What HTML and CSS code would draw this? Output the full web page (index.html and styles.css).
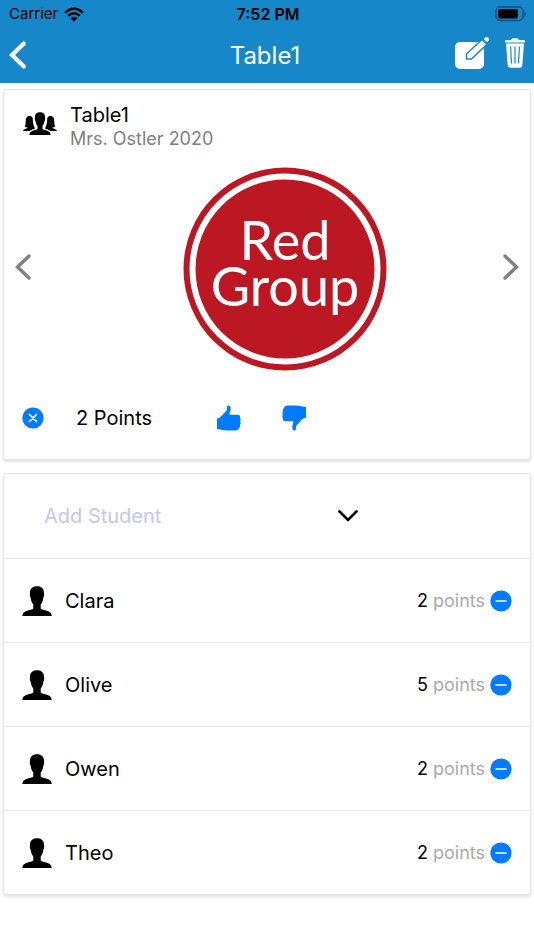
FILE: index.html
```html
<!DOCTYPE html>
<html lang="en">
<head>
<meta charset="utf-8">
<meta name="viewport" content="width=device-width, initial-scale=1">
<title>Table1</title>
<link rel="stylesheet" href="styles.css">
</head>
<body>
<svg class="symbols" aria-hidden="true">
  <symbol id="person" viewBox="0 0 30 30">
    <path d="M15 0.3C10.4 0.3 7.8 3 8 7.2C7.5 8.7 8 10.5 8.6 11.6C9 15 10 17 11.3 18.6V22.5C10.5 23.7 7.5 24 4.500 24.900C2 25.700 0.300 27 0.300 30H29.700C29.700 27 28 25.700 25.500 24.900C22.500 24 19.500 23.700 18.700 22.500V18.600C20 17 21 15 21.400 11.600C22 10.500 22.500 8.700 22 7.200C22.200 3 19.600 0.300 15 0.300Z"/>
  </symbol>
  <symbol id="minus" viewBox="0 0 22 22">
    <circle cx="11" cy="11" r="10.600" fill="#007aff"/>
    <path d="M6 11H16" stroke="#fff" stroke-width="1.600" stroke-linecap="round"/>
  </symbol>
</svg>

<header class="top">
  <div class="status">
    <div class="carrier">
      <span>Carrier</span>
      <svg class="wifi" viewBox="0 0 20 15" aria-hidden="true">
        <path d="M1.200 5.800C6.200 0.400 13.800 0.400 18.800 5.800M4.300 8.900C7.500 5.400 12.500 5.400 15.700 8.900" fill="none" stroke="#000" stroke-width="2.500"/>
        <path d="M6.500 11.300C8.500 9.300 11.500 9.300 13.500 11.300L10 14.800Z"/>
      </svg>
    </div>
    <time class="clock">7:52 PM</time>
    <svg class="battery" viewBox="0 0 32 16" aria-hidden="true">
      <rect x="1" y="1" width="27" height="13.500" rx="4" fill="none" stroke="#0d5077" stroke-width="1.400"/>
      <rect x="3" y="3" width="20" height="9.500" rx="2"/>
      <path d="M29.500 5.500Q31.300 6.200 31.300 7.800T29.500 10.100Z" fill="#0d5077"/>
    </svg>
  </div>
  <nav class="bar">
    <button class="icon-button back-button" aria-label="Back">
      <svg class="back" viewBox="0 0 18 28"><path d="M14.800 2.500L3 14L14.800 25.500" fill="none" stroke="#fff" stroke-width="4.200" stroke-linecap="round"/></svg>
    </button>
    <h1>Table1</h1>
    <div class="actions">
      <button class="icon-button" aria-label="Edit">
        <svg class="edit" viewBox="0 0 36 34">
          <rect x="1" y="6" width="29" height="27" rx="5" fill="#fff"/>
          <path d="M12.500 23V18L28 3.500L33 8.300L17.500 23Z" fill="#fff" stroke="#1688ca" stroke-width="1.500"/>
          <path d="M29.800 3.200L31.500 1.200Q32.600 0.300 33.700 1.300L34.800 2.400Q35.600 3.500 34.700 4.500L32.900 6.200Z" fill="#fff"/>
        </svg>
      </button>
      <button class="icon-button" aria-label="Delete">
        <svg class="trash" viewBox="0 0 22 30">
          <path d="M1 4.500V3Q1 2 2.500 2H7Q7.500 0.300 9 0.300H13Q14.500 0.300 15 2H19.500Q21 2 21 3V4.500Z" fill="#fff"/>
          <path d="M2 5.500H20L18.300 27.200Q18 29.700 15.700 29.700H6.300Q4 29.700 3.700 27.200Z" fill="#fff"/>
          <path d="M6.600 8.500L7.500 25.500M11 8.500V25.500M15.400 8.500L14.500 25.500" stroke="#1688ca" stroke-width="1.200"/>
        </svg>
      </button>
    </div>
  </nav>
</header>

<main>
  <section class="card group">
    <div class="group-head">
      <svg class="people" viewBox="0 0 34 24" aria-hidden="true">
        <path d="M6.500 4C3.500 4 2.700 6.500 2.800 9C2.800 11 2.500 13 1.700 14.300C2.500 15.200 3.500 15.500 4.800 15.500C4.500 17 0.300 16.500 0.200 19H6.800C8 17.600 10.500 17.300 12 16.500C11 14 10 12 9.800 8.500C10.200 5.500 9 4 6.500 4Z"/>
        <path d="M27.500 4C30.500 4 31.300 6.500 31.200 9C31.200 11 31.500 13 32.300 14.300C31.500 15.200 30.500 15.500 29.200 15.500C29.500 17 33.700 16.500 33.800 19H27.200C26 17.600 23.500 17.300 22 16.500C23 14 24 12 24.200 8.500C23.800 5.500 25 4 27.500 4Z"/>
        <path d="M17 0.300C13.300 0.300 11.800 2.500 12 5.500C11.600 7 12 8.500 12.700 9.500C13 11.500 13.700 13 14.500 14V17C13.500 18.500 6.500 17.800 6.300 23H27.700C27.500 17.800 20.500 18.500 19.500 17V14C20.300 13 21 11.500 21.300 9.500C22 8.500 22.400 7 22 5.500C22.200 2.500 20.700 0.300 17 0.300Z"/>
      </svg>
      <div>
        <h2>Table1</h2>
        <p class="subtitle">Mrs. Ostler 2020</p>
      </div>
    </div>
    <div class="carousel">
      <button class="icon-button" aria-label="Previous">
        <svg class="arrow" viewBox="0 0 16 26"><path d="M14 2L2.500 13L14 24" fill="none" stroke="#808080" stroke-width="3.400" stroke-linecap="round"/></svg>
      </button>
      <svg class="badge" viewBox="0 0 204 204" role="img" aria-label="Red Group">
        <circle cx="102" cy="102" r="101.500" fill="#bc1823"/>
        <circle cx="102" cy="102" r="92.500" fill="none" stroke="#fff" stroke-width="6"/>
        <text x="102" y="93" text-anchor="middle">Red</text>
        <text x="102" y="139" text-anchor="middle">Group</text>
      </svg>
      <button class="icon-button" aria-label="Next">
        <svg class="arrow" viewBox="0 0 16 26"><path d="M2 2L13.500 13L2 24" fill="none" stroke="#808080" stroke-width="3.400" stroke-linecap="round"/></svg>
      </button>
    </div>
    <div class="score">
      <button class="icon-button" aria-label="Clear points">
        <svg class="round" viewBox="0 0 22 22"><circle cx="11" cy="11" r="10.600" fill="#007aff"/><path d="M7.500 7.500L14.500 14.500M14.500 7.500L7.500 14.500" stroke="#fff" stroke-width="1.700" stroke-linecap="round"/></svg>
      </button>
      <span class="total">2 Points</span>
      <button class="icon-button" aria-label="Thumbs up">
        <svg class="thumb" viewBox="0 0 24 26"><path d="M0 13.500Q3 13 5 10.500L9.500 5.500C10.500 4 9.500 2 10.500 0.700C12 -0.200 13.700 1 13.700 3.500C13.800 6 12.300 8 12.700 9.500C15 10.200 19 9.200 22 10Q23.500 10.800 22.900 12.800Q24.200 14.200 23.200 16.400Q24.200 18.200 22.900 20Q23.500 22 21.800 23.300Q21.500 25.500 18 25.500H10C6 25.500 3 24.300 0 24Z" fill="#007aff"/></svg>
      </button>
      <button class="icon-button thumb-down" aria-label="Thumbs down">
        <svg class="thumb" viewBox="0 0 24 26"><path d="M24 12.500Q21 13 19 15.500L14.500 20.500C13.500 22 14.500 24 13.500 25.300C12 26.200 10.300 25 10.300 22.500C10.200 20 11.700 18 11.300 16.500C9 15.800 5 16.800 2 16Q0.500 15.200 1.100 13.200Q-0.200 11.800 0.800 9.600Q-0.200 7.800 1.100 6Q0.500 4 2.200 2.700Q2.500 0.500 6 0.500H14C18 0.500 21 1.700 24 2Z" fill="#007aff"/></svg>
      </button>
    </div>
  </section>

  <section class="card">
    <div class="picker">
      <select aria-label="Add Student"><option>Add Student</option></select>
      <svg class="chevron" viewBox="0 0 20 12" aria-hidden="true"><path d="M1.500 1.500L10 10L18.500 1.500" fill="none" stroke="#000" stroke-width="2.600" stroke-linecap="round"/></svg>
    </div>
    <ul class="students">
      <li><svg class="person" aria-hidden="true"><use href="#person"/></svg><span class="name">Clara</span><span class="points"><b>2</b> points</span><button class="icon-button" aria-label="Remove Clara"><svg class="round"><use href="#minus"/></svg></button></li>
      <li><svg class="person" aria-hidden="true"><use href="#person"/></svg><span class="name">Olive</span><span class="points"><b>5</b> points</span><button class="icon-button" aria-label="Remove Olive"><svg class="round"><use href="#minus"/></svg></button></li>
      <li><svg class="person" aria-hidden="true"><use href="#person"/></svg><span class="name">Owen</span><span class="points"><b>2</b> points</span><button class="icon-button" aria-label="Remove Owen"><svg class="round"><use href="#minus"/></svg></button></li>
      <li><svg class="person" aria-hidden="true"><use href="#person"/></svg><span class="name">Theo</span><span class="points"><b>2</b> points</span><button class="icon-button" aria-label="Remove Theo"><svg class="round"><use href="#minus"/></svg></button></li>
    </ul>
  </section>
</main>
</body>
</html>
```
FILE: styles.css
```css
* {
  box-sizing: border-box;
}

body {
  margin: 0;
  background: #fff;
  color: #000;
  font-family: Inter, "Liberation Sans", sans-serif;
  font-size: 20px;
  line-height: 24px;
}

h1,
h2,
p,
ul {
  margin: 0;
  padding: 0;
  font-weight: 400;
}

h2 {
  font-size: 20px;
}

svg {
  display: block;
}

.symbols {
  display: none;
}

.icon-button {
  padding: 0;
  border: 0;
  background: none;
}

.top {
  background: #1688ca;
}

.status {
  display: grid;
  grid-template-columns: 1fr auto 1fr;
  align-items: center;
  height: 28px;
  padding: 0 7px 0 9px;
  font-size: 15px;
}

.carrier {
  display: flex;
  align-items: center;
  gap: 6px;
}

.wifi {
  width: 20px;
  height: 15px;
}

.clock {
  font-size: 16px;
  font-weight: 600;
}

.battery {
  justify-self: end;
  width: 32px;
  height: 16px;
}

.bar {
  display: grid;
  grid-template-columns: 1fr auto 1fr;
  align-items: center;
  height: 55px;
  padding: 0 8px 0 4px;
}

.bar h1 {
  color: #fff;
  font-size: 24px;
  line-height: 32px;
}

.back-button {
  justify-self: start;
  padding: 0 0 2px 5px;
}

.back {
  width: 18px;
  height: 28px;
}

.actions {
  display: flex;
  align-items: center;
  justify-content: flex-end;
  gap: 14px;
  padding-bottom: 6px;
}

.edit {
  width: 36px;
  height: 34px;
}

.trash {
  width: 22px;
  height: 30px;
}

main {
  display: grid;
  gap: 13px;
  padding: 6px 3px;
}

.card {
  border: 1px solid #e6e6e6;
  border-radius: 3px;
  background: #fff;
  box-shadow: 0 2px 3px rgba(0, 0, 0, 0.12);
}

.group {
  padding: 13px 11px 28px;
}

.group-head {
  display: flex;
  align-items: flex-start;
  gap: 13px;
  padding-left: 8px;
}

.people {
  width: 34px;
  height: 24px;
  margin-top: 9px;
}

.subtitle {
  color: #808080;
  font-size: 18px;
}

.carousel {
  display: flex;
  align-items: center;
  justify-content: space-between;
  padding-top: 16px;
}

.carousel .icon-button {
  padding-bottom: 4px;
}

.arrow {
  width: 16px;
  height: 26px;
}

.badge {
  width: 204px;
  height: 204px;
  margin-left: 35px;
}

.badge text {
  fill: #fff;
  font-family: Lato, sans-serif;
  font-size: 54px;
  font-weight: 400;
}

.score {
  display: flex;
  align-items: center;
  padding: 34px 7px 0;
}

.total {
  width: 119px;
  margin-left: 32px;
  margin-right: 22px;
}

.thumb {
  width: 24px;
  height: 26px;
}

.thumb-down {
  margin-left: 41px;
}

.round {
  width: 22px;
  height: 22px;
}

.picker {
  display: flex;
  align-items: center;
  height: 84px;
  padding-left: 40px;
}

.picker select {
  width: 314px;
  height: 40px;
  margin-right: -20px;
  padding: 0;
  border: 0;
  background: none;
  color: #c3c8ee;
  font: inherit;
  appearance: none;
}

.chevron {
  width: 20px;
  height: 12px;
  pointer-events: none;
}

.students {
  list-style: none;
}

.students li {
  display: flex;
  align-items: center;
  min-height: 84px;
  padding: 0 18px;
  border-top: 1px solid #e8e8e8;
}

.person {
  width: 30px;
  height: 30px;
}

.name {
  flex: 1;
  margin-left: 13px;
}

.points {
  margin-right: 5px;
  color: #aaa;
  font-size: 18px;
}

.points b {
  color: #000;
  font-weight: 400;
}
```
